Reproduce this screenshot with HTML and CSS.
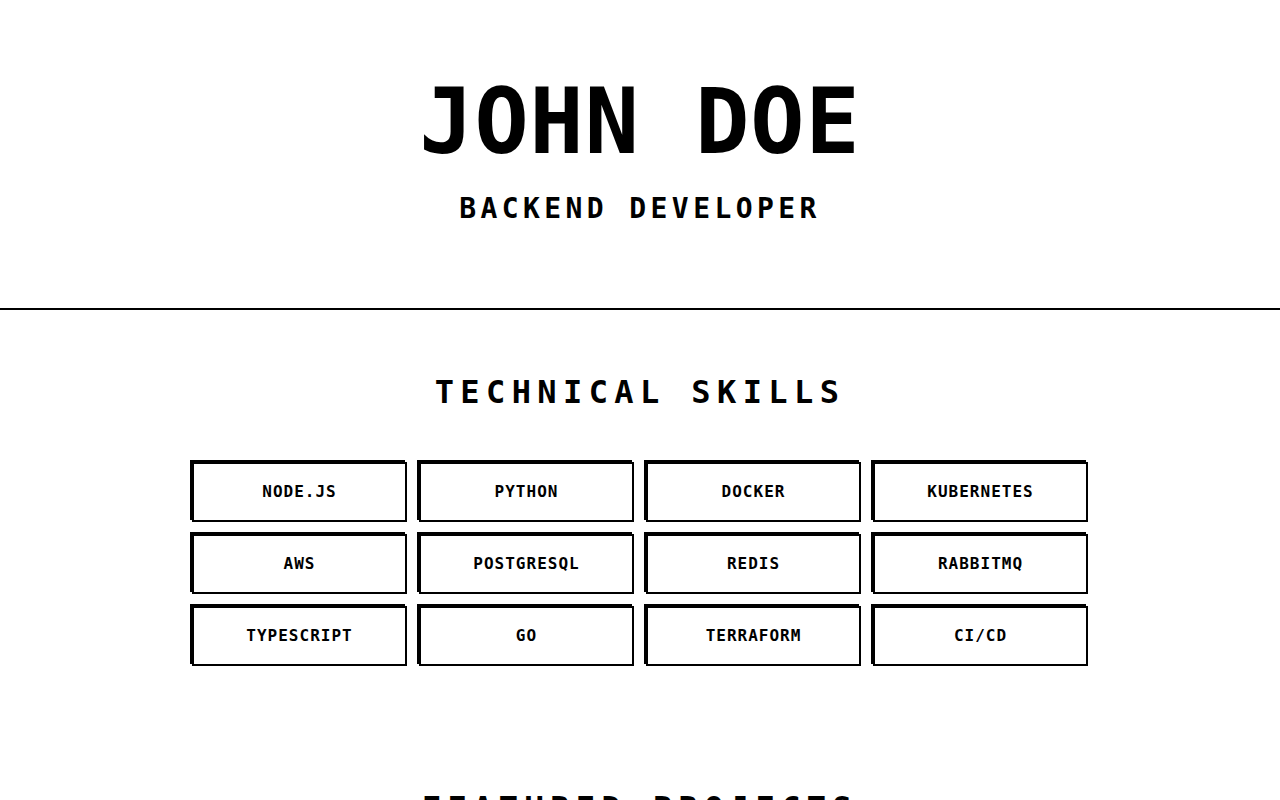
FILE: index.html
```html
<!DOCTYPE html>
<html lang="en">
<head>
<meta charset="utf-8">
<title>John Doe - Backend Developer</title>
<link rel="stylesheet" href="styles.css">
</head>
<body>
<header class="hero">
  <h1 class="hero-name">JOHN DOE</h1>
  <p class="hero-role">BACKEND DEVELOPER</p>
</header>
<main>
  <section class="section">
    <h2 class="section-title">TECHNICAL SKILLS</h2>
    <ul class="skills">
      <li class="skill">NODE.JS</li>
      <li class="skill">PYTHON</li>
      <li class="skill">DOCKER</li>
      <li class="skill">KUBERNETES</li>
      <li class="skill">AWS</li>
      <li class="skill">POSTGRESQL</li>
      <li class="skill">REDIS</li>
      <li class="skill">RABBITMQ</li>
      <li class="skill">TYPESCRIPT</li>
      <li class="skill">GO</li>
      <li class="skill">TERRAFORM</li>
      <li class="skill">CI/CD</li>
    </ul>
  </section>
  <section class="section">
    <h2 class="section-title">FEATURED PROJECTS</h2>
  </section>
</main>
</body>
</html>
```
FILE: styles.css
```css
* { box-sizing: border-box; }
html, body { margin: 0; padding: 0; }
body {
  background: #fff;
  color: #000;
  font-family: "DejaVu Sans Mono", "Liberation Mono", monospace;
}
.hero {
  padding: 77px 0 82px;
  text-align: center;
  border-bottom: 2px solid #000;
}
.hero-name {
  margin: 0 0 25px;
  font-size: 90px;
  line-height: 1;
  font-weight: 700;
  letter-spacing: 1px;
}
.hero-role {
  margin: 0;
  font-size: 28px;
  line-height: 1.2;
  font-weight: 700;
  letter-spacing: 4.4px;
}
.section {
  padding: 63px 0 60px;
  text-align: center;
}
.section-title {
  margin: 0 0 51px;
  font-size: 32px;
  line-height: 1.2;
  font-weight: 700;
  letter-spacing: 6.4px;
}
.skills {
  list-style: none;
  margin: 0 auto;
  padding: 0;
  width: 896px;
  display: grid;
  grid-template-columns: repeat(4, 1fr);
  gap: 12px;
}
.skill {
  height: 60px;
  border: 2px solid #000;
  box-shadow: -2px -2px 0 #000;
  display: flex;
  align-items: center;
  justify-content: center;
  font-size: 16px;
  font-weight: 700;
  letter-spacing: 1px;
}
```
